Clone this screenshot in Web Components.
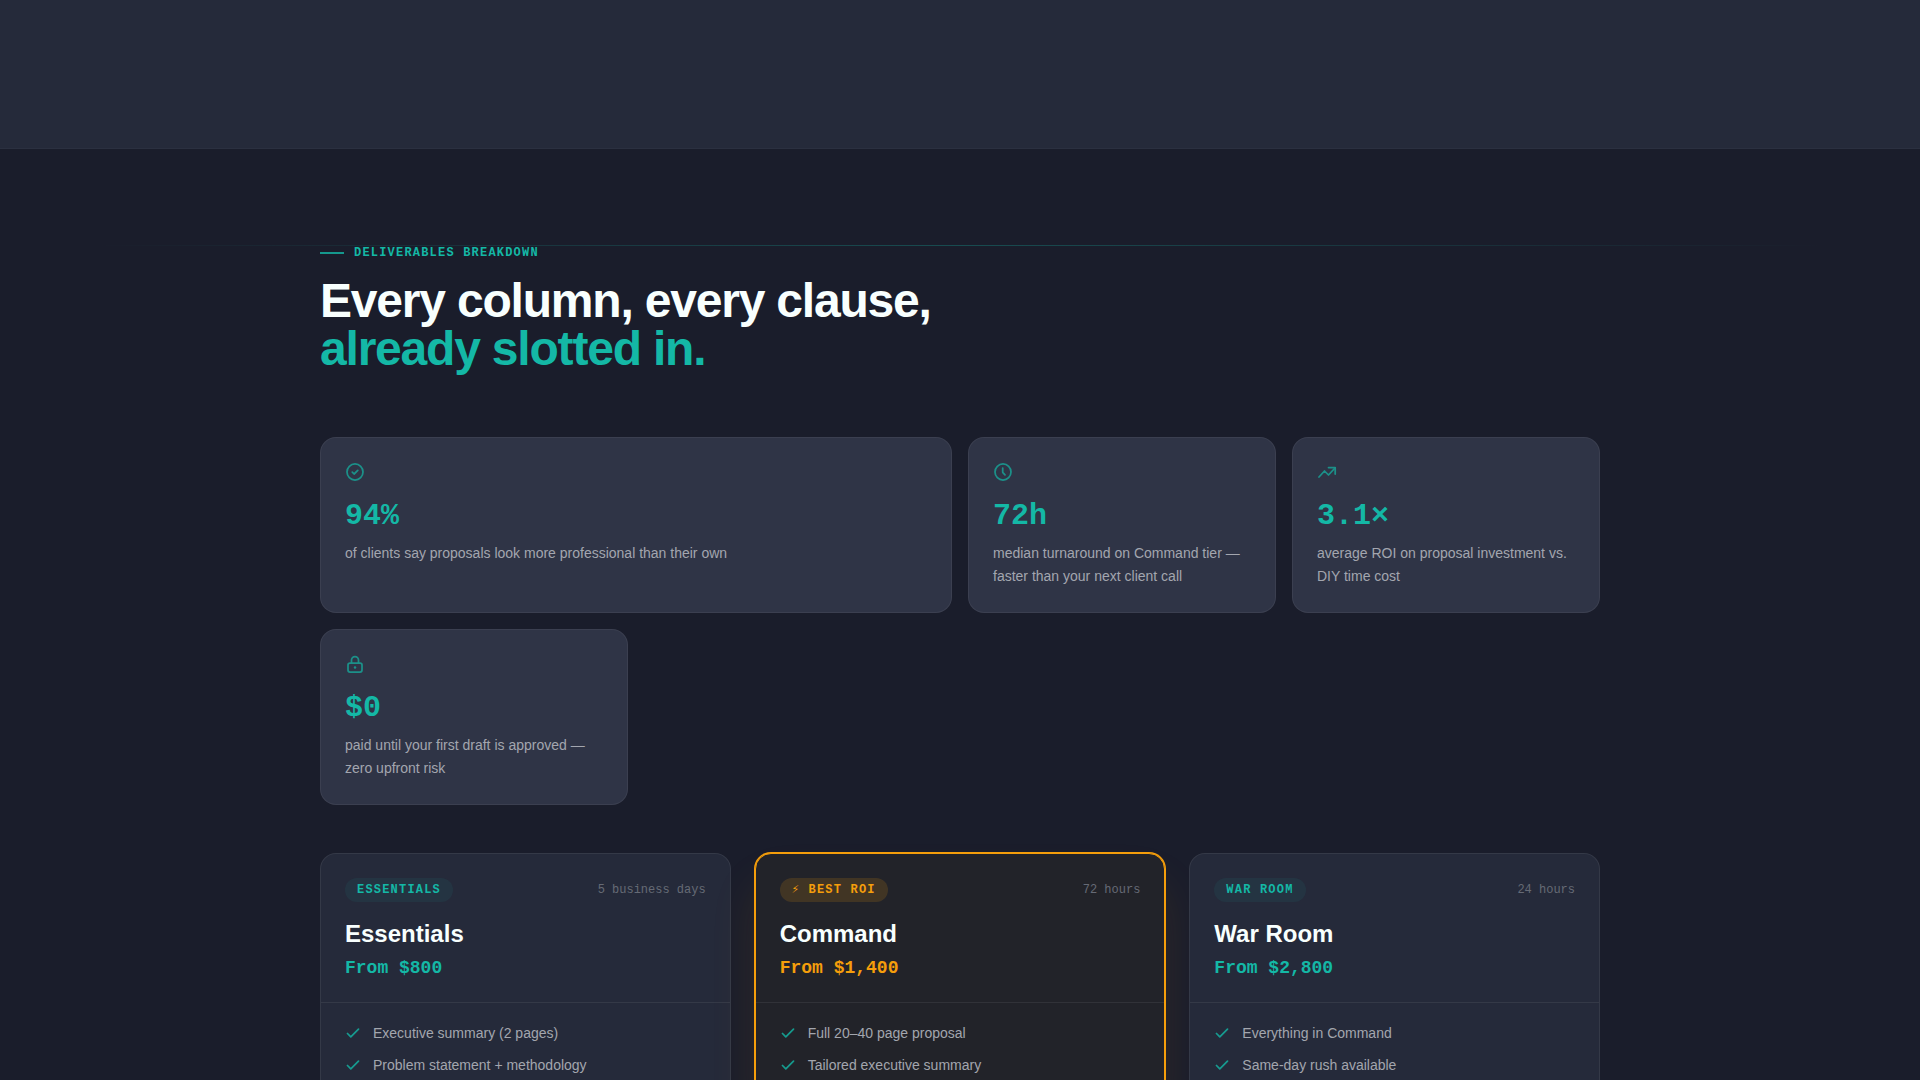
<!DOCTYPE html>
<html lang="en">
<head>
<meta charset="utf-8">
<meta name="viewport" content="width=device-width, initial-scale=1">
<title>Deliverables breakdown</title>
<style>
    :root {
        --bg: #1a1d2b;
        --surface: #252a3a;
        --card: #2f3446;
        --line: rgba(255,255,255,0.03);
        --teal: #14b8a6;
        --amber: #f59e0b;
        --mono: "Liberation Mono", "DejaVu Sans Mono", monospace;
    }
    body {
        margin: 0;
        overflow-x: hidden;
        background: var(--bg);
        color: #f8fffe;
        font-family: "Liberation Sans", Arial, sans-serif;
        font-size: 14px;
    }
</style>
</head>
<body>
<page-band></page-band>
<breakdown-section>
    <section-heading slot="heading" eyebrow="Deliverables breakdown">
        Every column, every clause,<span slot="accent">already slotted in.</span>
    </section-heading>
    <stat-card slot="stat" icon="check" value="94%" wide>of clients say proposals look more professional than their own</stat-card>
    <stat-card slot="stat" icon="clock" value="72h">median turnaround on Command tier — faster than your next client call</stat-card>
    <stat-card slot="stat" icon="trend" value="3.1×">average ROI on proposal investment vs. DIY time cost</stat-card>
    <stat-card slot="stat" icon="lock" value="$0">paid until your first draft is approved — zero upfront risk</stat-card>

    <tier-card slot="tier" badge="Essentials" time="5 business days" name="Essentials" price="From $800">
        <tier-item>Executive summary (2 pages)</tier-item>
        <tier-item>Problem statement + methodology</tier-item>
    </tier-card>
    <tier-card slot="tier" badge="⚡ Best ROI" time="72 hours" name="Command" price="From $1,400" featured>
        <tier-item>Full 20–40 page proposal</tier-item>
        <tier-item>Tailored executive summary</tier-item>
    </tier-card>
    <tier-card slot="tier" badge="War Room" time="24 hours" name="War Room" price="From $2,800">
        <tier-item>Everything in Command</tier-item>
        <tier-item>Same-day rush available</tier-item>
    </tier-card>
</breakdown-section>

<script>
"use strict";

const ICONS = {
    check: '<circle cx="10" cy="10" r="8"/><path d="M7.3 10.2l1.8 1.8 3.7-3.6"/>',
    clock: '<circle cx="10" cy="10" r="8"/><path d="M9.7 6v4.300l2.300 2.500"/>',
    trend: '<path d="M2 15l5.500-6 4 4L18 6"/><path d="M11.500 5.500H18.200V12"/>',
    lock: '<rect x="3" y="9" width="14" height="9" rx="2"/><path d="M6.500 9V6a3.500 3.500 0 0 1 7 0v3"/><circle cx="10" cy="13.500" r="1.250" fill="currentColor" stroke="none"/>'
};

class BaseElement extends HTMLElement {
    constructor() {
        super();
        this.shadow = this.attachShadow({ mode: "open" });
    }
    connectedCallback() {
        const t = document.createElement('template');
        t.innerHTML = this.render();
        this.shadow.replaceChildren(t.content.cloneNode(true));
    }
    attr(name) {
        return this.getAttribute(name) || "";
    }
}

class PageBand extends BaseElement {
    render() {
        return `
        <style>
        :host {
            display:block;
            height:148px;
            background:var(--surface);
            border-bottom:1px solid var(--line);
        }
        </style>`;
    }
}
customElements.define("page-band", PageBand);

class BreakdownSection extends BaseElement {
    render() {
        return `
        <style>
        :host { display:block; }
        section {
            position:relative;
            padding:96px 24px;
        }
        .rule {
            position:absolute; top:96px; left:0; right:0;
            height:1px;
            background:linear-gradient(90deg, transparent 5%, rgba(20,184,166,0.3), transparent 95%);
        }
        .inner {
            position:relative;
            max-width:1280px;
            margin:0 auto;
        }
        .stats {
            display:grid;
            grid-template-columns:repeat(4, 1fr);
            gap:16px;
            margin:64px 0 48px;
        }
        .tiers {
            display:grid;
            grid-template-columns:repeat(3, 1fr);
            gap:24px;
        }
        @media (max-width:900px) {
            .stats { grid-template-columns:repeat(2, 1fr); }
            .tiers { grid-template-columns:1fr; }
        }
        </style>
        <section>
            <div class="rule"></div>
            <div class="inner">
                <slot name="heading"></slot>
                <div class="stats"><slot name="stat"></slot></div>
                <div class="tiers"><slot name="tier"></slot></div>
            </div>
        </section>`;
    }
}
customElements.define("breakdown-section", BreakdownSection);

class SectionHeading extends BaseElement {
    render() {
        return `
        <style>
        :host { display:block; }
        .eyebrow {
            display:flex;
            align-items:center;
            gap:10px;
            margin:0 0 16px;
            font:bold 12px/16px var(--mono);
            letter-spacing:0.1em;
            text-transform:uppercase;
            color:var(--teal);
        }
        .eyebrow::before {
            content:"";
            width:24px; height:2px;
            background:currentColor;
            opacity:0.8;
        }
        h2 {
            margin:0;
            font-size:48px;
            line-height:48px;
            letter-spacing:-0.025em;
        }
        .accent { display:block; color:var(--teal); }
        </style>
        <p class="eyebrow">${this.attr("eyebrow")}</p>
        <h2><slot></slot><span class="accent"><slot name="accent"></slot></span></h2>`;
    }
}
customElements.define("section-heading", SectionHeading);

class StatCard extends BaseElement {
    render() {
        return `
        <style>
        :host {
            display:block;
            padding:24px;
            background:var(--card);
            border:1px solid rgba(255,255,255,0.06);
            border-radius:16px;
        }
        :host([wide]) { grid-column:span 2; }
        svg {
            display:block;
            width:20px; height:20px;
            margin-bottom:16px;
            fill:none;
            stroke:currentColor;
            stroke-width:1.75;
            stroke-linecap:round;
            stroke-linejoin:round;
            color:var(--teal);
            opacity:0.7;
        }
        .value {
            margin-bottom:8px;
            font:bold 30px/36px var(--mono);
            color:var(--teal);
        }
        p {
            margin:0;
            line-height:23px;
            color:#a3a6af;
        }
        </style>
        <svg viewBox="0 0 20 20" aria-hidden="true">${ICONS[this.attr("icon")]}</svg>
        <div class="value">${this.attr("value")}</div>
        <p><slot></slot></p>`;
    }
}
customElements.define("stat-card", StatCard);

class TierCard extends BaseElement {
    render() {
        return `
        <style>
        :host {
            --accent:var(--teal);
            --badge:rgba(20,184,166,0.08);
            display:block;
            background:var(--surface);
            border:1px solid rgba(255,255,255,0.07);
            border-radius:16px;
        }
        :host([featured]) {
            --accent:var(--amber);
            --badge:rgba(245,158,11,0.15);
            background:#222329;
            border-color:var(--amber);
            box-shadow:0 0 0 1px var(--amber), 0 32px 48px rgba(245,158,11,0.1);
        }
        header {
            padding:24px 24px 20px;
            border-bottom:1px solid rgba(255,255,255,0.07);
        }
        .top {
            display:flex;
            align-items:center;
            justify-content:space-between;
            margin-bottom:16px;
            font:12px/16px var(--mono);
        }
        .badge {
            padding:4px 12px;
            border-radius:12px;
            background:var(--badge);
            color:var(--accent);
            font-weight:bold;
            letter-spacing:0.1em;
            text-transform:uppercase;
        }
        .time { color:#666a75; }
        h3 {
            margin:0 0 4px;
            font-size:24px;
            line-height:32px;
        }
        .price {
            font:bold 18px/28px var(--mono);
            color:var(--accent);
        }
        .list {
            display:flex;
            flex-direction:column;
            gap:12px;
            padding:20px 24px 24px;
        }
        </style>
        <header>
            <div class="top">
                <span class="badge">${this.attr("badge")}</span>
                <span class="time">${this.attr("time")}</span>
            </div>
            <h3>${this.attr("name")}</h3>
            <div class="price">${this.attr("price")}</div>
        </header>
        <div class="list" role="list"><slot></slot></div>`;
    }
}
customElements.define("tier-card", TierCard);

class TierItem extends BaseElement {
    connectedCallback() {
        super.connectedCallback();
        this.setAttribute("role", "listitem");
    }
    render() {
        return `
        <style>
        :host {
            display:flex;
            align-items:center;
            gap:12px;
            line-height:20px;
            color:#a3a6ae;
        }
        svg {
            flex:none;
            width:16px; height:16px;
            fill:none;
            stroke:var(--teal);
            stroke-width:1.75;
            stroke-linecap:round;
            stroke-linejoin:round;
            opacity:0.8;
        }
        </style>
        <svg viewBox="0 0 16 16" aria-hidden="true"><path d="M2.500 8.500l3.300 3.300 7.700-7.700"/></svg>
        <span><slot></slot></span>`;
    }
}
customElements.define("tier-item", TierItem);
</script>
</body>
</html>
